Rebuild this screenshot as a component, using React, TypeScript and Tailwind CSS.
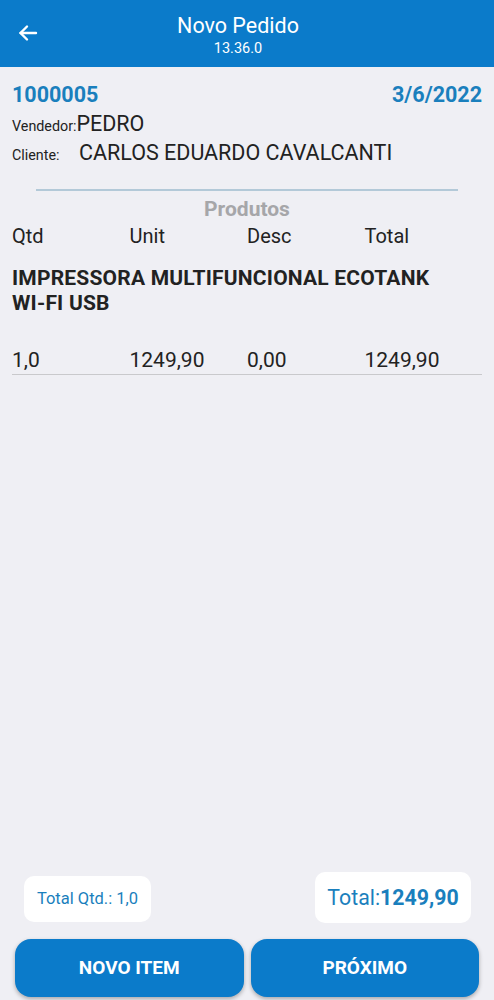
import React from 'react'

const cols = ['Qtd', 'Unit', 'Desc', 'Total']
const item = {
  name: 'IMPRESSORA MULTIFUNCIONAL ECOTANK WI-FI USB',
  values: ['1,0', '1249,90', '0,00', '1249,90'],
}

function BackArrow() {
  return (
    <svg width="24" height="24" viewBox="0 0 24 24" fill="none" stroke="white" strokeWidth="2.4" strokeLinecap="round" strokeLinejoin="round">
      <path d="M20 12H4.5" />
      <path d="M11 5.5 4.5 12l6.5 6.5" />
    </svg>
  )
}

export default function App() {
  return (
    <div className="h-[1000px] w-[494px] flex flex-col bg-[#efeff4] font-['Roboto',sans-serif]">
      {/* Header */}
      <div className="h-[67px] bg-[#0b7bca] flex items-center relative shrink-0">
        <button className="absolute left-[16px] top-[21px]">
          <BackArrow />
        </button>
        <div className="flex-1 flex flex-col items-center pr-[18px] pt-[3px]">
          <span className="text-white text-[21.5px] leading-[28px]">Novo Pedido</span>
          <span className="text-white text-[14.5px] leading-[18px]">13.36.0</span>
        </div>
      </div>

      {/* Content */}
      <div className="flex-1 flex flex-col px-[12px] pt-[15px]">
        <div className="flex justify-between items-center">
          <span className="text-[#1a7fbd] font-bold text-[21.5px] leading-[26px]">1000005</span>
          <span className="text-[#1a7fbd] font-bold text-[21.5px] leading-[26px]">3/6/2022</span>
        </div>
        <div className="flex items-baseline mt-[2px] text-[#222]">
          <span className="text-[14.3px]">Vendedor:</span>
          <span className="text-[21.5px] leading-[28px]">PEDRO</span>
        </div>
        <div className="flex items-baseline mt-[1px] text-[#222]">
          <span className="text-[14.3px] w-[67px]">Cliente:</span>
          <span className="text-[21.5px] leading-[28px]">CARLOS EDUARDO CAVALCANTI</span>
        </div>

        <div className="mx-[24px] mt-[22px] h-[2px] bg-[#b3c9d8]" />
        <div className="text-center text-[#a6a6a9] font-bold text-[21px] leading-[26px] mt-[5px]">Produtos</div>

        <div className="grid grid-cols-4 text-[20px] leading-[26px] text-[#222] mt-[1px]">
          {cols.map((c) => (
            <span key={c}>{c}</span>
          ))}
        </div>

        <div className="mt-[17px] max-w-[430px] font-bold text-[21px] leading-[25px] tracking-[0.2px] text-[#222]">{item.name}</div>

        <div className="grid grid-cols-4 text-[21px] leading-[26px] text-[#222] mt-[31px] pb-[1px] border-b border-[#c9c9cc]">
          {item.values.map((v, i) => (
            <span key={i}>{v}</span>
          ))}
        </div>
      </div>

      {/* Footer */}
      <div className="shrink-0 px-[15px] pb-[3px]">
        <div className="flex justify-between items-end px-[9px]">
          <div className="bg-white rounded-[10px] w-[127px] h-[46px] flex items-center justify-center mb-[1px]">
            <span className="text-[#1a7fbd] text-[16.5px]">Total Qtd.: 1,0</span>
          </div>
          <div className="bg-white rounded-[10px] w-[156px] h-[51px] flex items-center justify-center mr-[-1px]">
            <span className="text-[#1a7fbd] text-[21.3px]">
              Total:<span className="font-bold">1249,90</span>
            </span>
          </div>
        </div>
        <div className="flex gap-[7px] mt-[16px]">
          <button className="flex-1 h-[58px] rounded-[16px] bg-[#0b7bca] text-white font-bold text-[19px] shadow-[0_2px_4px_rgba(0,0,0,0.3)]">
            NOVO ITEM
          </button>
          <button className="flex-1 h-[58px] rounded-[16px] bg-[#0b7bca] text-white font-bold text-[19px] shadow-[0_2px_4px_rgba(0,0,0,0.3)]">
            PRÓXIMO
          </button>
        </div>
      </div>
    </div>
  )
}
